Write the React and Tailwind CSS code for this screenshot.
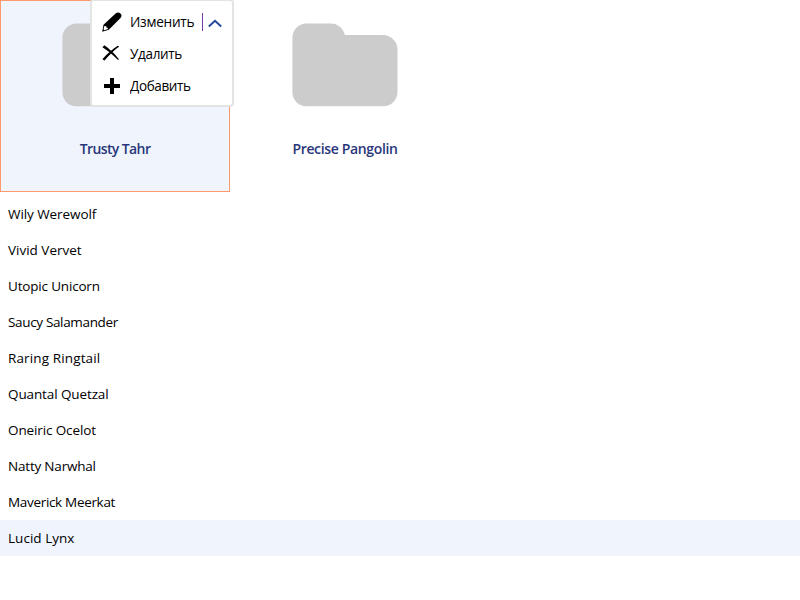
const folders = [
  { name: "Trusty Tahr", active: true, tracking: "tracking-[-0.6px]" },
  { name: "Precise Pangolin", active: false, tracking: "tracking-[-0.35px]" },
];

const releases = [
  { name: "Wily Werewolf", tracking: "tracking-[-0.07px]" },
  { name: "Vivid Vervet", tracking: "tracking-[0px]" },
  { name: "Utopic Unicorn", tracking: "tracking-[-0.18px]" },
  { name: "Saucy Salamander", tracking: "tracking-[-0.34px]" },
  { name: "Raring Ringtail", tracking: "tracking-[0.13px]" },
  { name: "Quantal Quetzal", tracking: "tracking-[-0.11px]" },
  { name: "Oneiric Ocelot", tracking: "tracking-[-0.12px]" },
  { name: "Natty Narwhal", tracking: "tracking-[-0.2px]" },
  { name: "Maverick Meerkat", tracking: "tracking-[-0.32px]" },
  { name: "Lucid Lynx", tracking: "tracking-[0.03px]", active: true },
];

function FolderIcon() {
  return (
    <svg width="106" height="84" viewBox="0 0 106 84" className="block" fill="#cccccc">
      <path d="M14.5 .6H38.5C46 .6 51.5 5.5 52.8 12H91C99 12 105.5 18.5 105.5 26.5V69C105.5 77 99 83.3 91 83.3H14.5C6.5 83.3 .4 77 .4 69V15C.4 7 6.5 .6 14.5 .6Z" />
    </svg>
  );
}

function PencilIcon() {
  return (
    <svg width="20" height="20" viewBox="0 0 20 20" className="block">
      <path d="M.2 19.8 1.5 12.8 13.6 1.6C15.2 .1 17 .2 18.4 1.6 19.9 3.1 19.9 4.5 18.5 5.9L6.8 17.8Z" fill="#000" />
      <path d="M2.3 13.9 4.3 14.2 4.6 15.7 6 16.1 5.8 17 2.5 18.3 1.5 17.3Z" fill="#fff" />
    </svg>
  );
}

function CrossIcon() {
  return (
    <svg width="18" height="16" viewBox="0 0 18 16" className="block" fill="#000">
      <path d="M.4 2.3 2.4 .2C6.4 3 12.7 8.5 17 14.2L16 15C11 10 5 5.3 .4 2.3Z" />
      <path d="M15.8 .8 17.2 1.4C12 5.3 6.9 10 2.5 15.6L.4 14.2C5 9 10.5 4.2 15.8 .8Z" />
    </svg>
  );
}

function PlusIcon() {
  return (
    <svg width="16" height="16" viewBox="0 0 16 16" className="block" fill="#000">
      <path d="M6 0H10V6H16V10H10V16H6V10H0V6H6Z" />
    </svg>
  );
}

function ContextMenu() {
  return (
    <div className="absolute left-[90px] top-[-1px] h-[108px] w-[144px] rounded-[4px] border-2 border-[#e4e4e4] bg-white pt-[5px] text-[15px] text-black">
      <div className="flex h-8 items-center">
        <span className="ml-[10px] w-[28px]"><PencilIcon /></span>
        <span className="mb-[2px] w-[72px] origin-left scale-x-[0.91] whitespace-nowrap tracking-[-0.3px]">Изменить</span>
        <span className="h-[18px] w-px bg-[#7439a6]" />
        <svg width="14" height="9" viewBox="0 0 14 9" className="ml-[5px] mt-[2px]" fill="none" stroke="#24489b" strokeWidth="2">
          <path d="M.8 7.6 7 1.8 13.2 7.6" />
        </svg>
      </div>
      <div className="flex h-8 items-center">
        <span className="mb-[2px] ml-[10px] w-[28px]"><CrossIcon /></span>
        <span className="mb-[2px] origin-left scale-x-[0.9] tracking-[-0.35px]">Удалить</span>
      </div>
      <div className="flex h-8 items-center">
        <span className="ml-[12px] w-[26px]"><PlusIcon /></span>
        <span className="mb-[2px] origin-left scale-x-[0.9] tracking-[-0.4px]">Добавить</span>
      </div>
    </div>
  );
}

export default function App() {
  return (
    <div className="h-[600px] w-full overflow-hidden bg-white font-['Open_Sans','Noto_Sans',sans-serif]">
      <div className="relative mb-1 flex">
        {folders.map((folder) => (
          <div
            key={folder.name}
            className={`flex h-48 w-[230px] flex-col items-center border pt-[22px] ${
              folder.active ? "border-[#ff996b] bg-[#f0f5fd]" : "border-transparent"
            }`}
          >
            <FolderIcon />
            <span className={`mt-[32px] text-sm font-semibold leading-5 text-[#29377a] ${folder.tracking}`}>
              {folder.name}
            </span>
          </div>
        ))}
        <ContextMenu />
      </div>
      <ul>
        {releases.map((release) => (
          <li
            key={release.name}
            className={`flex h-9 items-center px-2 text-[13.5px] text-black ${release.active ? "bg-[#f0f5fd]" : ""}`}
          >
            <span className={release.tracking}>{release.name}</span>
          </li>
        ))}
      </ul>
    </div>
  );
}
